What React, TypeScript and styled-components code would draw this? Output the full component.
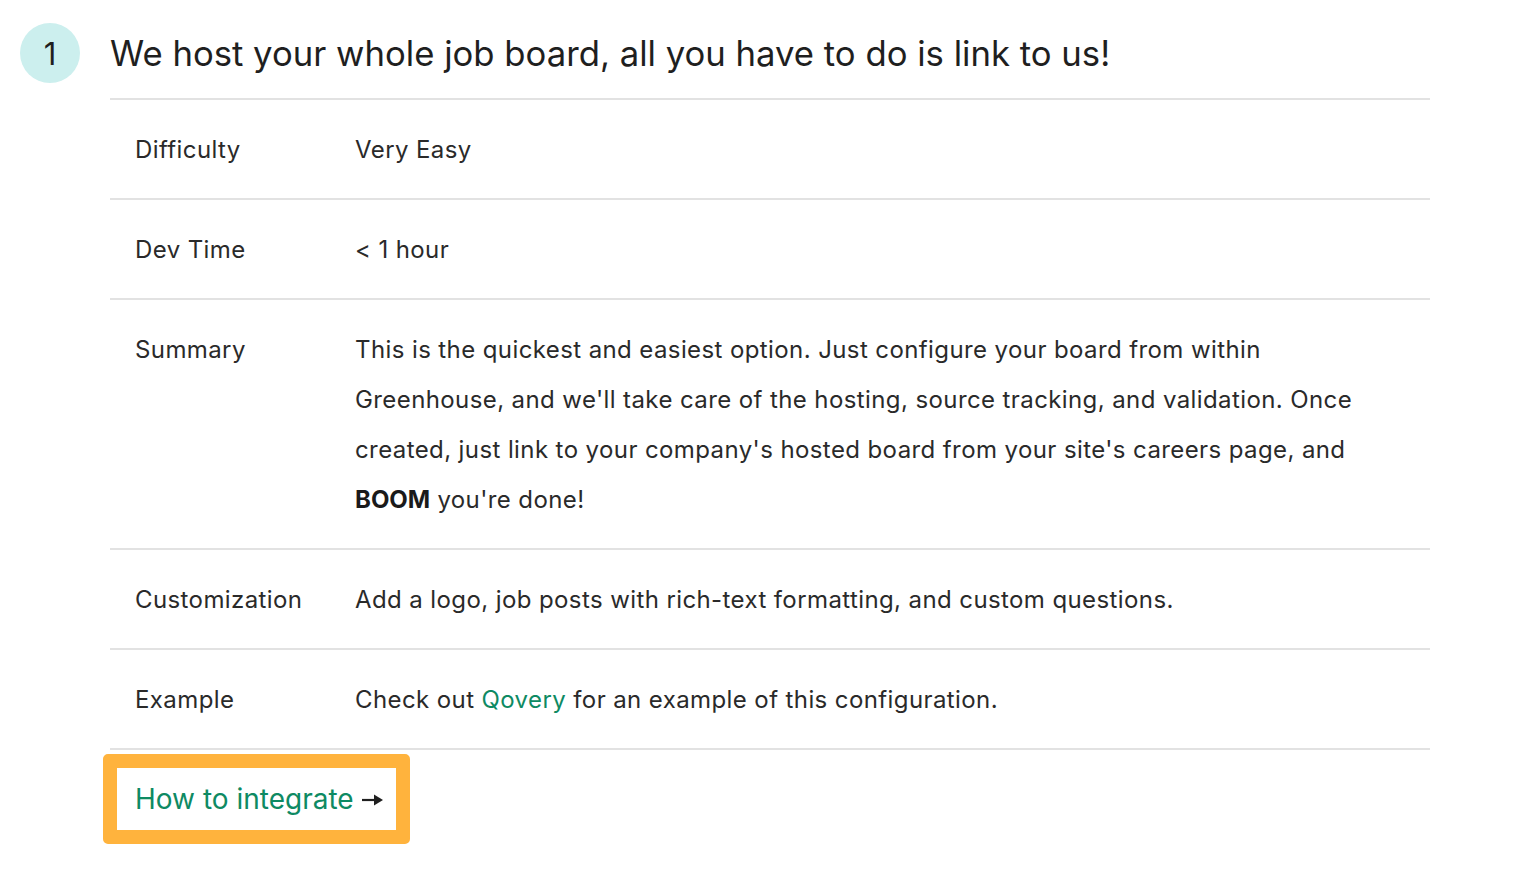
import React from "react";
import styled, { createGlobalStyle } from "styled-components";

const Global = createGlobalStyle`
  html, body { margin: 0; padding: 0; background: #ffffff; }
  body { font-family: "Inter", "Liberation Sans", Arial, sans-serif; color: #222222; }
`;

const Page = styled.div`
  padding: 23px 0 0 20px;
`;

const Header = styled.div`
  display: flex;
  align-items: center;
  gap: 30px;
  height: 60px;
`;

const StepBadge = styled.div`
  width: 60px;
  height: 60px;
  border-radius: 50%;
  background: #ccefee;
  display: flex;
  align-items: center;
  justify-content: center;
  font-size: 31px;
  color: #1f1f1f;
`;

const Title = styled.h2`
  margin: 0;
  font-size: 34.7px;
  font-weight: 400;
  color: #1f1f1f;
`;

const Body = styled.div`
  margin: 15px 0 0 90px;
  width: 1320px;
`;

const Table = styled.div`
  border-top: 2px solid #e2e2e2;
`;

const Row = styled.div`
  display: grid;
  grid-template-columns: 220px 1fr;
  border-bottom: 2px solid #e2e2e2;
  padding: 25px 0 23px;
  font-size: 24px;
  letter-spacing: 0.4px;
  line-height: 50px;
`;

const Label = styled.div`
  padding-left: 25px;
  color: #2a2a2a;
`;

const Value = styled.div`
  padding: 0 55px 0 25px;
  color: #2a2a2a;
`;

const Strong = styled.strong`
  font-weight: 700;
  color: #1a1a1a;
  letter-spacing: 0;
`;

const Link = styled.a`
  color: #0e8a63;
  text-decoration: none;
`;

const CtaFrame = styled.div`
  display: flex;
  align-items: center;
  margin: 4px 0 0 -7px;
  width: 307px;
  height: 90px;
  box-sizing: border-box;
  border: 14px solid #ffb33d;
  border-radius: 5px;
  padding-left: 18px;
`;

const CtaLink = styled.a`
  font-size: 28px;
  color: #0e8a63;
  text-decoration: none;
  display: inline-flex;
  align-items: center;
  gap: 8px;
`;

const Arrow = styled.svg`
  width: 21px;
  height: 12px;
  margin-top: 2px;
`;

const rows: { label: string; value: React.ReactNode }[] = [
  { label: "Difficulty", value: "Very Easy" },
  { label: "Dev Time", value: "< 1 hour" },
  {
    label: "Summary",
    value: (
      <>
        This is the quickest and easiest option. Just configure your board from within
        Greenhouse, and we'll take care of the hosting, source tracking, and validation. Once
        created, just link to your company's hosted board from your site's careers page, and{" "}
        <Strong>BOOM</Strong> you're done!
      </>
    ),
  },
  {
    label: "Customization",
    value: "Add a logo, job posts with rich-text formatting, and custom questions.",
  },
  {
    label: "Example",
    value: (
      <>
        Check out <Link href="#">Qovery</Link> for an example of this configuration.
      </>
    ),
  },
];

export default function App() {
  return (
    <>
      <Global />
      <Page>
        <Header>
          <StepBadge>1</StepBadge>
          <Title>We host your whole job board, all you have to do is link to us!</Title>
        </Header>
        <Body>
          <Table>
            {rows.map((r) => (
              <Row key={r.label}>
                <Label>{r.label}</Label>
                <Value>{r.value}</Value>
              </Row>
            ))}
          </Table>
          <CtaFrame>
            <CtaLink href="#">
              How to integrate
              <Arrow viewBox="0 0 21 12" aria-hidden="true">
                <line x1="0" y1="6" x2="14" y2="6" stroke="#1f1f1f" strokeWidth="2.2" />
                <polygon points="12,0.5 21,6 12,11.5" fill="#1f1f1f" />
              </Arrow>
            </CtaLink>
          </CtaFrame>
        </Body>
      </Page>
    </>
  );
}
